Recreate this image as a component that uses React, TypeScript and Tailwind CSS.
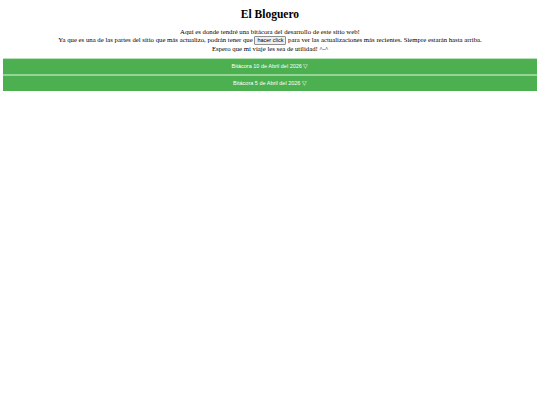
export default function App() {
  const entries = ["Bitácora 10 de Abril del 2026 ▽", "Bitácora 5 de Abril del 2026 ▽"];
  return (
    <div className="min-h-screen bg-white px-[3px] pt-[7px] text-black" style={{ fontFamily: '"Liberation Serif", serif' }}>
      <h1 className="text-center text-[11.5px] font-bold leading-[14px]">El Bloguero</h1>
      <div className="mt-[7px] text-center text-[6.75px] leading-[8px]">
        <p>Aquí es donde tendré una bitácora del desarrollo de este sitio web!</p>
        <p>
          Ya que es una de las partes del sitio que más actualizo, podrán tener que{" "}
          <button
            className="inline-block rounded-[1px] border border-[#8f8f8f] bg-[#efefef] px-[2px] text-[5.5px] leading-[7px]"
            style={{ fontFamily: '"Liberation Sans", sans-serif' }}
          >
            hacer click
          </button>{" "}
          para ver las actualizaciones más recientes. Siempre estarán hasta arriba.
        </p>
        <p>Espero que mi viaje les sea de utilidad! ^-^</p>
      </div>
      <div className="mt-[5px] flex flex-col gap-[2px] border-t border-[#b9e2ba] bg-[#95d497]">
        {entries.map((e) => (
          <button
            key={e}
            className="h-[15px] w-full bg-[#4caf50] text-center text-[5.5px] text-white"
            style={{ fontFamily: '"Liberation Sans", sans-serif' }}
          >
            {e}
          </button>
        ))}
      </div>
    </div>
  );
}
